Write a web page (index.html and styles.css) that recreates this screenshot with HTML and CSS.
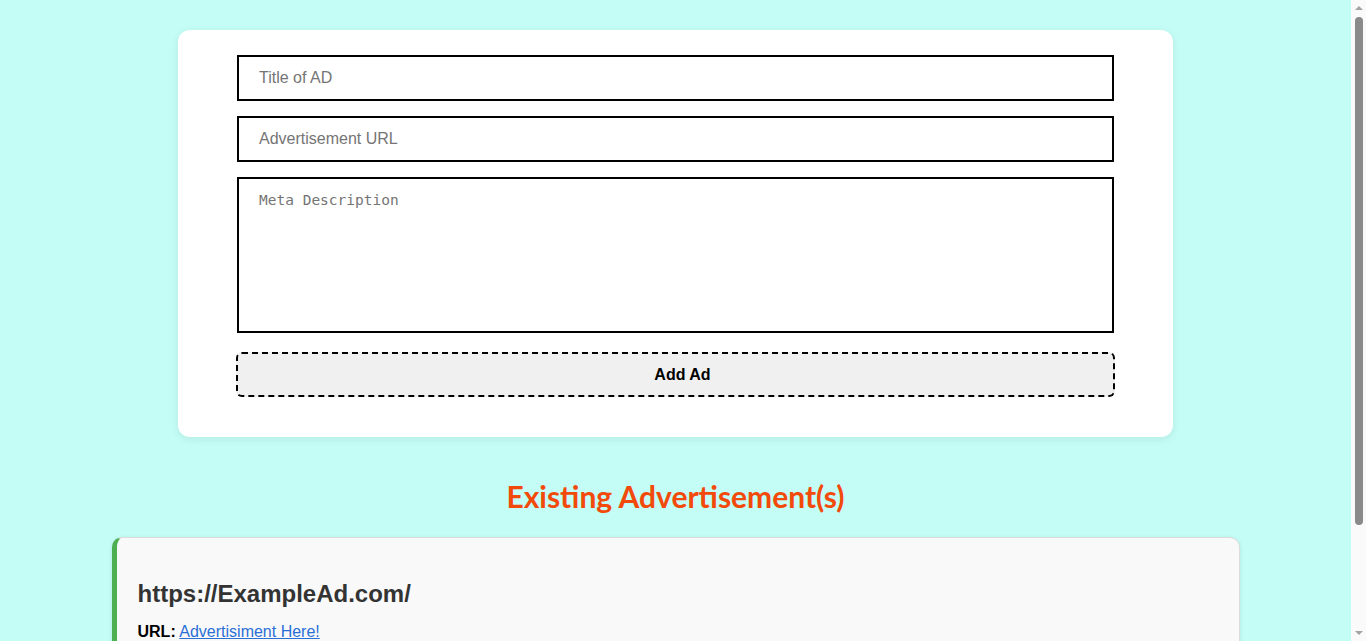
FILE: index.html
```html
<!DOCTYPE html>
<html lang="en">
<head>
<meta charset="utf-8">
<title>Ads</title>
<link rel="stylesheet" href="styles.css">
</head>
<body>
  <main class="page">
    <form class="form-card">
      <input class="field" type="text" placeholder="Title of AD">
      <input class="field" type="text" placeholder="Advertisement URL">
      <textarea class="field area" placeholder="Meta Description"></textarea>
      <button class="add-btn" type="button">Add Ad</button>
    </form>

    <h1 class="section-title">Existing Advertisement(s)</h1>

    <section class="ad-card">
      <h2 class="ad-title">https://ExampleAd.com/</h2>
      <p class="ad-line"><strong>URL:</strong> <a href="#">Advertisiment Here!</a></p>
      <p class="ad-line"><strong>Description:</strong> This is an example advertisement description.</p>
      <button class="del-btn" type="button">Delete</button>
    </section>
  </main>
  <div class="scrollbar" aria-hidden="true">
    <span class="sb-arrow sb-up"></span>
    <span class="sb-thumb"></span>
    <span class="sb-arrow sb-down"></span>
  </div>
</body>
</html>
```
FILE: styles.css
```css
html, body {
  margin: 0;
  padding: 0;
}
body {
  background: #c4fdf6;
  font-family: "Liberation Sans", Arial, sans-serif;
}
.page {
  width: calc(100% - 15px);
  display: flex;
  flex-direction: column;
  align-items: center;
  padding: 30px 0 40px;
}
.form-card {
  width: 995px;
  box-sizing: border-box;
  background: #fff;
  border-radius: 12px;
  box-shadow: 0 2px 8px rgba(0, 0, 0, 0.08);
  padding: 25px 59px 40px;
  display: flex;
  flex-direction: column;
}
.field {
  display: block;
  width: 100%;
  box-sizing: border-box;
  border: 2px solid #000;
  border-radius: 0;
  padding: 12px 20px;
  font-family: "Liberation Sans", Arial, sans-serif;
  font-size: 16px;
  line-height: 18px;
  margin: 0 0 15px;
  outline: none;
  background: #fff;
}
.field::placeholder {
  color: #757575;
}
.area {
  height: 156px;
  resize: none;
  font-family: "DejaVu Sans Mono", "Liberation Mono", monospace;
  font-size: 14.5px;
  line-height: 16px;
  padding-top: 13px;
  margin-bottom: 19px;
}
.add-btn {
  width: calc(100% + 2px);
  margin-left: -1px;
  height: 45px;
  padding: 0 0 0 14px;
  border: 2px dashed #000;
  border-radius: 6px;
  background: #f0f0f0;
  font-family: "Liberation Sans", Arial, sans-serif;
  font-weight: bold;
  font-size: 16px;
  color: #000;
}
.section-title {
  margin: 42px 0 24px;
  font-family: Lato, "Open Sans", sans-serif;
  font-weight: bold;
  font-size: 30px;
  line-height: 34px;
  color: #f24a0a;
}
.ad-card {
  width: 1128px;
  box-sizing: border-box;
  background: #f9f9f9;
  border: 1px solid #dcdcdc;
  border-left: 5px solid #4caf50;
  border-radius: 10px;
  box-shadow: 0 1px 4px rgba(0, 0, 0, 0.1);
  padding: 20px 20px 20px 21px;
}
.ad-title {
  margin: 22px 0 15px;
  font-size: 24px;
  font-weight: bold;
  color: #333;
}
.ad-line {
  margin: 0 0 12px;
  font-size: 16px;
  color: #000;
}
.ad-line a {
  color: #2a6fd6;
  text-decoration: underline;
}
.del-btn {
  padding: 8px 16px;
  border: none;
  border-radius: 5px;
  background: #e53935;
  color: #fff;
  font-weight: bold;
}

/* classic scrollbar chrome drawn over the right edge */
.scrollbar {
  position: fixed;
  top: 0;
  right: 0;
  width: 15px;
  height: 100vh;
  background: #fafafa;
  display: flex;
  flex-direction: column;
  align-items: center;
}
.sb-arrow {
  width: 0;
  height: 0;
  border-left: 4px solid transparent;
  border-right: 4px solid transparent;
}
.sb-up {
  margin-top: 6px;
  border-bottom: 4px solid #a3a3a3;
}
.sb-thumb {
  margin-top: 7px;
  width: 8px;
  height: 508px;
  border-radius: 4px;
  background: #8a8a8a;
}
.sb-down {
  margin-top: auto;
  margin-bottom: 6px;
  border-top: 4px solid #a3a3a3;
}
```
